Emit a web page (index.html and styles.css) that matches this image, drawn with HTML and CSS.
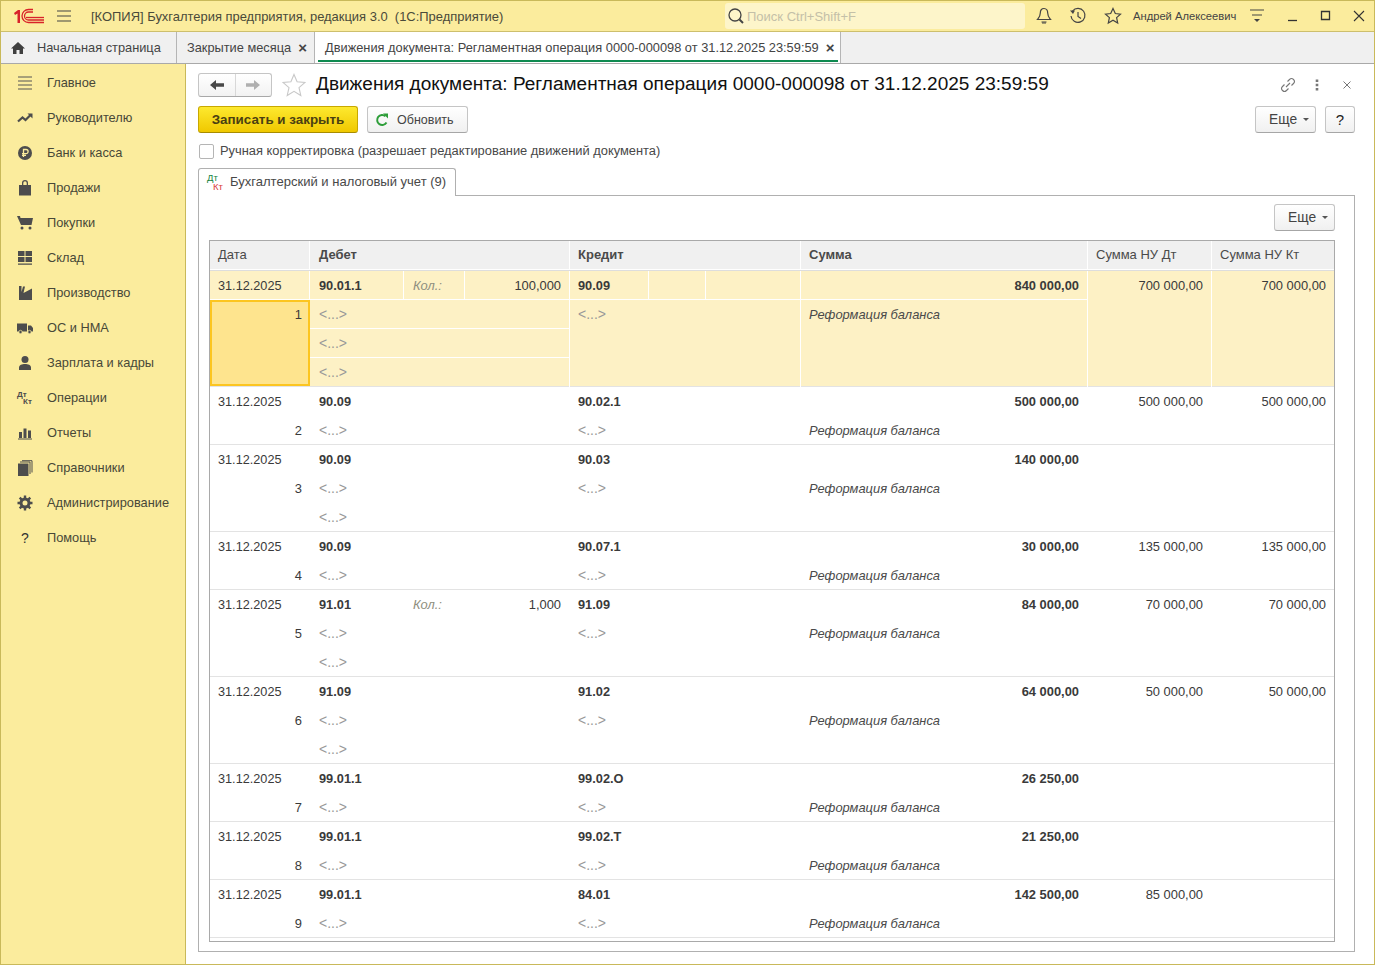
FILE: index.html
```html
<!DOCTYPE html>
<html lang="ru">
<head>
<meta charset="utf-8">
<title>Движения документа</title>
<link rel="stylesheet" href="styles.css">
</head>
<body>
<div class="app">
  <header class="titlebar">
    <svg class="logo" width="32" height="16" viewBox="0 0 32 16"><path d="M1 5 5 2h2v13H4.500V5.500L2 7z" fill="#d8232a"/><path d="M31 14.500H15.500a6.500 6.500 0 1 1 0-13H20M31 12H15.500a4 4 0 1 1 0-8H20" fill="none" stroke="#d8232a" stroke-width="1.300"/><path d="M13 9.500h18" stroke="#d8232a" stroke-width="1.300" fill="none"/></svg>
    <svg class="burger" width="16" height="14" viewBox="0 0 16 14"><path d="M1 2h14M1 7h14M1 12h14" stroke="#444" stroke-width="1.200"/></svg>
    <div class="apptitle">[КОПИЯ] Бухгалтерия предприятия, редакция 3.0&nbsp; (1С:Предприятие)</div>
    <div class="search">
      <svg width="18" height="18" viewBox="0 0 18 18"><circle cx="8" cy="8" r="6" fill="none" stroke="#444" stroke-width="1.300"/><path d="M12.500 12.500 16 16" stroke="#444" stroke-width="2"/></svg>
      <span>Поиск Ctrl+Shift+F</span>
    </div>
    <div class="sysicons">
      <svg width="16" height="18" viewBox="0 0 16 18"><path d="M8 1.500c-2.600 0-3.700 2-3.700 4.500 0 3.500-1.500 5-2.800 6.500h13C13.200 11 11.700 9.500 11.700 6c0-2.500-1.100-4.500-3.700-4.500zM5.500 15h5" fill="none" stroke="#444" stroke-width="1.200"/><path d="M6 15.500h4v1H6z" fill="#444"/></svg>
      <svg width="18" height="18" viewBox="0 0 18 18"><path d="M3.500 4A7 7 0 1 1 2 9" fill="none" stroke="#444" stroke-width="1.200"/><path d="M1 3.500 4 7l2-3.500z" fill="#444"/><path d="M9 5v4.500l3 2" fill="none" stroke="#444" stroke-width="1.200"/></svg>
      <svg width="18" height="18" viewBox="0 0 18 18"><path d="M9 1.500l2.300 5 5.200.6-3.900 3.500 1.100 5.400L9 13.200 4.300 16l1.100-5.400L1.500 7.100l5.200-.6z" fill="none" stroke="#444" stroke-width="1.200"/></svg>
    </div>
    <div class="username">Андрей Алексеевич</div>
    <svg class="sysmenu" width="16" height="16" viewBox="0 0 16 16"><path d="M1 2h14M3 7h10" stroke="#444" stroke-width="1.200"/><path d="M5 11h6l-3 3z" fill="#444"/></svg>
    <div class="wincontrols">
      <svg width="12" height="12" viewBox="0 0 12 12"><path d="M1 10.500h9" stroke="#333" stroke-width="1.300"/></svg>
      <svg width="12" height="12" viewBox="0 0 12 12"><path d="M1.500 1.500h8v8h-8z" fill="none" stroke="#333" stroke-width="1.300"/></svg>
      <svg width="12" height="12" viewBox="0 0 12 12"><path d="M1 1l10 10M11 1 1 11" stroke="#333" stroke-width="1.100"/></svg>
    </div>
  </header>

  <nav class="tabs">
    <div class="tab tab-home">
      <svg width="14" height="12" viewBox="0 0 14 12"><path d="M7 0 0 6.500h2V12h3.500V8h3v4H12V6.500h2z" fill="#3f3f3f"/></svg>
      <span>Начальная страница</span>
    </div>
    <div class="tab tab-close"><span>Закрытие месяца</span><b class="x">×</b></div>
    <div class="tab tab-active"><span>Движения документа: Регламентная операция 0000-000098 от 31.12.2025 23:59:59</span><b class="x">×</b></div>
  </nav>

  <div class="main">
    <aside class="sidebar">
      <div class="side-item"><svg viewBox="0 0 16 16"><path d="M1 2h14M1 6h14M1 10h14M1 14h14" stroke="#555" stroke-width="1"/></svg><span>Главное</span></div>
      <div class="side-item"><svg viewBox="0 0 16 16"><path d="M1 11.500 5.500 7.500 8.500 10 14 4.500" fill="none" stroke="#4d4d4d" stroke-width="2.200"/><path d="M10.500 3.500h5v5z" fill="#4d4d4d"/></svg><span>Руководителю</span></div>
      <div class="side-item"><svg viewBox="0 0 16 16"><circle cx="8" cy="8" r="7" fill="#4d4d4d"/><path d="M6.500 12V4.500h2.500a2 2 0 0 1 0 4.200H5M5 10.300h4" fill="none" stroke="#fbec9d" stroke-width="1.300"/></svg><span>Банк и касса</span></div>
      <div class="side-item"><svg viewBox="0 0 16 16"><path d="M2 5h3V3a3 3 0 0 1 6 0v2h3v10.500H2zM6.300 5h3.400V3a1.700 1.700 0 0 0-3.400 0z" fill="#4d4d4d" fill-rule="evenodd"/></svg><span>Продажи</span></div>
      <div class="side-item"><svg viewBox="0 0 16 16"><path d="M0 1h3l.5 2H16l-1.500 7H4z" fill="#4d4d4d"/><circle cx="5" cy="13" r="1.500" fill="#4d4d4d"/><circle cx="13" cy="13" r="1.500" fill="#4d4d4d"/></svg><span>Покупки</span></div>
      <div class="side-item"><svg viewBox="0 0 16 16"><path d="M1 1h6.500v5H1zM8.500 1H15v5H8.500zM1 7h6.500v5H1zM8.500 7H15v5H8.500zM1 13.500h14v1.300H1z" fill="#4d4d4d"/></svg><span>Склад</span></div>
      <div class="side-item"><svg viewBox="0 0 16 16"><path d="M2 15V1h2.500v6L6 1.500h2L6.500 8 15 3.500V15z" fill="#4d4d4d"/></svg><span>Производство</span></div>
      <div class="side-item"><svg viewBox="0 0 16 16"><path d="M0 3.500h10v8H0zM11 5.500h3l2 2.500v3.500h-5z" fill="#4d4d4d"/><circle cx="3.500" cy="12" r="1.700" fill="#4d4d4d" stroke="#fbec9d" stroke-width=".7"/><circle cx="12.500" cy="12" r="1.700" fill="#4d4d4d" stroke="#fbec9d" stroke-width=".7"/></svg><span>ОС и НМА</span></div>
      <div class="side-item"><svg viewBox="0 0 16 16"><circle cx="8" cy="4.500" r="3.500" fill="#4d4d4d"/><path d="M2 15v-2.500C2 10 5 9 8 9s6 1 6 3.500V15z" fill="#4d4d4d"/></svg><span>Зарплата и кадры</span></div>
      <div class="side-item side-dt"><i class="dtk"><em>Дт</em><em>Кт</em></i><span>Операции</span></div>
      <div class="side-item"><svg viewBox="0 0 16 16"><path d="M2 7h3v6H2zM6.500 3.500h3V13h-3zM11 5.500h3V13h-3zM1 13.500h14v1H1z" fill="#4d4d4d"/></svg><span>Отчеты</span></div>
      <div class="side-item"><svg viewBox="0 0 16 16"><path d="M1 3.500h10.500V16H1z" fill="#4d4d4d"/><path d="M3 2h10v12M5 .7h10v11.800" fill="none" stroke="#4d4d4d" stroke-width="1"/></svg><span>Справочники</span></div>
      <div class="side-item"><svg viewBox="0 0 16 16"><circle cx="8" cy="8" r="4" fill="none" stroke="#4d4d4d" stroke-width="3"/><path d="M8 .5v15M.5 8h15M2.700 2.700l10.600 10.600M13.300 2.700 2.700 13.300" stroke="#4d4d4d" stroke-width="2.400" stroke-dasharray="2.800 9.400"/></svg><span>Администрирование</span></div>
      <div class="side-item side-q"><i>?</i><span>Помощь</span></div>
    </aside>

    <main class="content">
      <div class="headrow">
        <div class="navbtns">
          <div class="navbtn"><svg width="14" height="12" viewBox="0 0 14 12"><path d="M0 6l6-5v3.200h8v3.600H6V11z" fill="#484848"/></svg></div>
          <div class="navbtn"><svg width="14" height="12" viewBox="0 0 14 12"><path d="M14 6 8 1v3.200H0v3.600h8V11z" fill="#b0b0b0"/></svg></div>
        </div>
        <svg class="favstar" width="24" height="24" viewBox="0 0 24 24"><path d="M12 1.500l3.100 7.300 7.900.7-6 5.200 1.800 7.800L12 18.300l-6.800 4.200L7 14.700 1 9.500l7.900-.7z" fill="none" stroke="#c8c8c8" stroke-width="1.100"/></svg>
        <h1>Движения документа: Регламентная операция 0000-000098 от 31.12.2025 23:59:59</h1>
        <div class="headicons">
          <svg width="16" height="16" viewBox="0 0 16 16"><path d="M6 10 10 6M7.500 4.500l2-2a2.800 2.800 0 0 1 4 4l-2 2M8.500 11.500l-2 2a2.800 2.800 0 0 1-4-4l2-2" fill="none" stroke="#777" stroke-width="1.100"/></svg>
          <svg width="4" height="12" viewBox="0 0 4 12"><path d="M.7.500h2.600v2.400H.7zM.7 4.800h2.600v2.400H.7zM.7 9.100h2.600v2.400H.7z" fill="#777"/></svg>
          <svg class="close-form" width="8" height="8" viewBox="0 0 8 8"><path d="M.5.500l7 7M7.500.500l-7 7" stroke="#777" stroke-width="1"/></svg>
        </div>
      </div>

      <div class="toolbar">
        <div class="btn btn-primary">Записать и закрыть</div>
        <div class="btn btn-refresh"><svg width="14" height="14" viewBox="0 0 14 14"><path d="M11.500 9.500A5 5 0 1 1 10.500 3.300" fill="none" stroke="#2e9e3a" stroke-width="2"/><path d="M8 .5h5v5z" fill="#2e9e3a"/></svg><span>Обновить</span></div>
        <div class="toolbar-right">
          <div class="btn btn-more">Еще<i class="caret"></i></div>
          <div class="btn btn-help">?</div>
        </div>
      </div>

      <label class="check"><i class="box"></i><span>Ручная корректировка (разрешает редактирование движений документа)</span></label>

      <div class="tabstrip">
        <div class="doc-tab"><i class="dtk dtk-color"><em>Дт</em><em>Кт</em></i><span>Бухгалтерский и налоговый учет (9)</span></div>
      </div>

      <section class="panel">
        <div class="panel-tools"><div class="btn btn-more">Еще<i class="caret"></i></div></div>
        <div class="grid">
          <div class="grid-head rec-cols">
            <div class="h c-date">Дата</div>
            <div class="h c-debit b">Дебет</div>
            <div class="h c-credit b">Кредит</div>
            <div class="h c-sum b">Сумма</div>
            <div class="h c-dt">Сумма НУ Дт</div>
            <div class="h c-kt">Сумма НУ Кт</div>
          </div>

          <div class="rec rec-cols rec-sel l4">
            <div class="date r1 sep">31.12.2025</div>
            <div class="num cur">1</div>
            <div class="cell acc r1 s1 sep">90.01.1</div>
            <div class="cell lbl r1 s2 sep">Кол.:</div>
            <div class="cell val r1 s3 sep">100,000</div>
            <div class="cell sub r2 dspan sep">&lt;...&gt;</div>
            <div class="cell sub r3 dspan sep">&lt;...&gt;</div>
            <div class="cell sub r4 dspan">&lt;...&gt;</div>
            <div class="cell acc r1 s4 sep">90.09</div>
            <div class="cell r1 s5 sep"></div>
            <div class="cell r1 s6 sep"></div>
            <div class="cell sub r2 cspan tall">&lt;...&gt;</div>
            <div class="cell amt r1 c-sum sep">840 000,00</div>
            <div class="cell note r2 c-sum tall">Реформация баланса</div>
            <div class="cell val r1 c-dt full">700 000,00</div>
            <div class="cell val r1 c-kt full">700 000,00</div>
          </div>

          <div class="rec rec-cols l2">
            <div class="date r1">31.12.2025</div><div class="num">2</div>
            <div class="cell acc r1 s1">90.09</div><div class="cell sub r2 dspan">&lt;...&gt;</div>
            <div class="cell acc r1 cspan">90.02.1</div><div class="cell sub r2 cspan">&lt;...&gt;</div>
            <div class="cell amt r1 c-sum">500 000,00</div><div class="cell note r2 c-sum">Реформация баланса</div>
            <div class="cell val r1 c-dt">500 000,00</div><div class="cell val r1 c-kt">500 000,00</div>
          </div>

          <div class="rec rec-cols l3">
            <div class="date r1">31.12.2025</div><div class="num">3</div>
            <div class="cell acc r1 s1">90.09</div><div class="cell sub r2 dspan">&lt;...&gt;</div><div class="cell sub r3 dspan">&lt;...&gt;</div>
            <div class="cell acc r1 cspan">90.03</div><div class="cell sub r2 cspan">&lt;...&gt;</div>
            <div class="cell amt r1 c-sum">140 000,00</div><div class="cell note r2 c-sum">Реформация баланса</div>
          </div>

          <div class="rec rec-cols l2">
            <div class="date r1">31.12.2025</div><div class="num">4</div>
            <div class="cell acc r1 s1">90.09</div><div class="cell sub r2 dspan">&lt;...&gt;</div>
            <div class="cell acc r1 cspan">90.07.1</div><div class="cell sub r2 cspan">&lt;...&gt;</div>
            <div class="cell amt r1 c-sum">30 000,00</div><div class="cell note r2 c-sum">Реформация баланса</div>
            <div class="cell val r1 c-dt">135 000,00</div><div class="cell val r1 c-kt">135 000,00</div>
          </div>

          <div class="rec rec-cols l3">
            <div class="date r1">31.12.2025</div><div class="num">5</div>
            <div class="cell acc r1 s1">91.01</div><div class="cell lbl r1 s2">Кол.:</div><div class="cell val r1 s3">1,000</div>
            <div class="cell sub r2 dspan">&lt;...&gt;</div><div class="cell sub r3 dspan">&lt;...&gt;</div>
            <div class="cell acc r1 cspan">91.09</div><div class="cell sub r2 cspan">&lt;...&gt;</div>
            <div class="cell amt r1 c-sum">84 000,00</div><div class="cell note r2 c-sum">Реформация баланса</div>
            <div class="cell val r1 c-dt">70 000,00</div><div class="cell val r1 c-kt">70 000,00</div>
          </div>

          <div class="rec rec-cols l3">
            <div class="date r1">31.12.2025</div><div class="num">6</div>
            <div class="cell acc r1 s1">91.09</div><div class="cell sub r2 dspan">&lt;...&gt;</div><div class="cell sub r3 dspan">&lt;...&gt;</div>
            <div class="cell acc r1 cspan">91.02</div><div class="cell sub r2 cspan">&lt;...&gt;</div>
            <div class="cell amt r1 c-sum">64 000,00</div><div class="cell note r2 c-sum">Реформация баланса</div>
            <div class="cell val r1 c-dt">50 000,00</div><div class="cell val r1 c-kt">50 000,00</div>
          </div>

          <div class="rec rec-cols l2">
            <div class="date r1">31.12.2025</div><div class="num">7</div>
            <div class="cell acc r1 s1">99.01.1</div><div class="cell sub r2 dspan">&lt;...&gt;</div>
            <div class="cell acc r1 cspan">99.02.О</div><div class="cell sub r2 cspan">&lt;...&gt;</div>
            <div class="cell amt r1 c-sum">26 250,00</div><div class="cell note r2 c-sum">Реформация баланса</div>
          </div>

          <div class="rec rec-cols l2">
            <div class="date r1">31.12.2025</div><div class="num">8</div>
            <div class="cell acc r1 s1">99.01.1</div><div class="cell sub r2 dspan">&lt;...&gt;</div>
            <div class="cell acc r1 cspan">99.02.Т</div><div class="cell sub r2 cspan">&lt;...&gt;</div>
            <div class="cell amt r1 c-sum">21 250,00</div><div class="cell note r2 c-sum">Реформация баланса</div>
          </div>

          <div class="rec rec-cols l2">
            <div class="date r1">31.12.2025</div><div class="num">9</div>
            <div class="cell acc r1 s1">99.01.1</div><div class="cell sub r2 dspan">&lt;...&gt;</div>
            <div class="cell acc r1 cspan">84.01</div><div class="cell sub r2 cspan">&lt;...&gt;</div>
            <div class="cell amt r1 c-sum">142 500,00</div><div class="cell note r2 c-sum">Реформация баланса</div>
            <div class="cell val r1 c-dt">85 000,00</div>
          </div>
        </div>
      </section>
    </main>
  </div>
</div>
</body>
</html>
```
FILE: styles.css
```css
* { box-sizing: border-box; }
html, body { margin: 0; height: 100%; overflow: hidden; }
body {
  font-family: "Liberation Sans", Arial, sans-serif;
  font-size: 13px;
  color: #3a3a3a;
  background: #fff;
}
i, em { font-style: normal; }
.app {
  width: 1375px;
  height: 965px;
  display: flex;
  flex-direction: column;
  border: 1px solid #c9b95a;
}

/* title bar */
.titlebar {
  height: 31px;
  flex: none;
  display: flex;
  align-items: center;
  background: #fbec9d;
  border-bottom: 1px solid #cdbf6d;
}
.logo { margin-left: 12px; flex: none; }
.burger { margin-left: 11px; flex: none; }
.apptitle { margin-left: 19px; width: 634px; flex: none; white-space: nowrap; color: #4a4a3a; font-size: 12.94px; }
.search {
  width: 300px;
  height: 26px;
  flex: none;
  display: flex;
  align-items: center;
  gap: 2px;
  padding-left: 2px;
  background: #fdf5ca;
  border-radius: 3px;
  color: #c4c0a8;
  font-size: 13px;
}
.sysicons { display: flex; gap: 17px; align-items: center; margin-left: 11px; flex: none; }
.username { margin-left: 11px; font-size: 11.2px; white-space: nowrap; width: 104px; flex: none; color: #444; }
.sysmenu { margin-left: 12px; flex: none; }
.wincontrols { margin-left: 22px; display: flex; gap: 21px; align-items: center; flex: none; }

/* tab bar */
.tabs {
  height: 32px;
  flex: none;
  display: flex;
  background: #f0f0f0;
  border-bottom: 1px solid #a9a9a9;
}
.tab {
  height: 31px;
  display: flex;
  align-items: center;
  border-right: 1px solid #b5b5b5;
  white-space: nowrap;
  color: #444;
  font-size: 12.8px;
}
.tab-home { width: 176px; padding-left: 10px; gap: 12px; }
.tab-close { width: 138px; padding-left: 10px; }
.tab-close .x { margin-left: 7px; }
.tab-active {
  width: 526px;
  padding-left: 10px;
  background: #fff;
  font-size: 12.82px;
  position: relative;
}
.tab-active::after {
  content: "";
  position: absolute;
  left: 3px;
  right: 2px;
  bottom: 1px;
  height: 2px;
  background: #0e8a50;
}
.tab-active .x { margin-left: 7px; }
.x { font-size: 15px; line-height: 1; color: #444; }

/* layout */
.main { flex: 1; display: flex; min-height: 0; }
.sidebar {
  width: 185px;
  flex: none;
  padding-top: 1px;
  background: #fbec9d;
  border-right: 1px solid #c9b95a;
}
.side-item {
  height: 35px;
  display: flex;
  align-items: center;
  padding-left: 16px;
  color: #484838;
  font-size: 12.8px;
  white-space: nowrap;
}
.side-item svg { width: 16px; height: 16px; flex: none; margin-right: 14px; }
.side-q i { width: 16px; margin-right: 14px; text-align: center; font-weight: 400; font-size: 14px; color: #333; flex: none; }
.dtk { display: flex; flex-direction: column; width: 16px; margin-right: 14px; flex: none; font-size: 8px; line-height: 7px; font-weight: 700; color: #4d4d4d; }
.dtk em:last-child { margin-left: 6px; }
.dtk-color { width: 17px; font-size: 9.5px; line-height: 9px; font-weight: 400; }
.dtk-color em:first-child { color: #14843f; }
.dtk-color em:last-child { color: #d94040; }

.content { flex: 1; min-width: 0; display: flex; flex-direction: column; padding: 8px 19px 12px 12px; }

/* header */
.headrow { height: 25px; display: flex; align-items: center; flex: none; }
.navbtns {
  width: 74px;
  height: 24px;
  display: flex;
  border: 1px solid #c5c5c5;
  border-bottom-color: #a8a8a8;
  border-radius: 3px;
  background: linear-gradient(#fff, #f2f2f2);
}
.navbtn { flex: 1; display: flex; align-items: center; justify-content: center; }
.navbtn + .navbtn { border-left: 1px solid #d8d8d8; }
.favstar { margin-left: 10px; flex: none; }
h1 { margin: 0 0 0 10px; padding-bottom: 2px; font-weight: 400; font-size: 19.03px; color: #111; white-space: nowrap; flex: none; }
.headicons { margin-left: auto; display: flex; align-items: center; gap: 19px; padding-right: 4px; }
.close-form { margin-left: 5px; }

/* toolbar */
.toolbar { height: 27px; margin-top: 9px; display: flex; flex: none; align-items: stretch; }
.btn {
  display: flex;
  align-items: center;
  justify-content: center;
  border: 1px solid #c5c5c5;
  border-bottom-color: #a6a6a6;
  border-radius: 3px;
  background: linear-gradient(#fff, #f0f0f0);
  color: #444;
  white-space: nowrap;
}
.btn-primary {
  width: 160px;
  background: linear-gradient(#fde92f, #f0c800);
  border-color: #c8a800;
  border-bottom-color: #a88c00;
  color: #4a4012;
  font-weight: 700;
  font-size: 13.4px;
}
.btn-refresh { width: 101px; margin-left: 9px; gap: 8px; font-size: 12.5px; justify-content: flex-start; padding-left: 7px; }
.toolbar-right { margin-left: auto; display: flex; gap: 9px; }
.btn-more { width: 61px; gap: 6px; font-size: 13.8px; justify-content: flex-start; padding-left: 13px; }
.btn-help { width: 30px; font-size: 15px; color: #222; }
.caret { width: 0; height: 0; border: 3px solid transparent; border-top: 3px solid #555; border-bottom: 0; }

/* check */
.check { height: 16px; margin-top: 10px; display: flex; align-items: center; gap: 6px; flex: none; font-size: 12.88px; color: #484848; }
.check span { padding-bottom: 2px; }
.box { width: 15px; height: 15px; margin-left: 1px; border: 1px solid #b5b5b5; border-radius: 2px; background: #fff; }

/* tabs of document */
.tabstrip { height: 28px; margin-top: 9px; flex: none; display: flex; }
.doc-tab {
  width: 258px;
  height: 28px;
  padding: 0 0 2px 8px;
  display: flex;
  align-items: center;
  border: 1px solid #b0b0b0;
  border-bottom: 0;
  border-radius: 3px 3px 0 0;
  background: #fff;
  position: relative;
  z-index: 1;
  font-size: 13.04px;
  color: #484848;
  white-space: nowrap;
}
.doc-tab .dtk { margin-right: 6px; }
.panel {
  flex: 1;
  min-height: 0;
  margin-top: -1px;
  padding: 8px 19px 9px 10px;
  border: 1px solid #b0b0b0;
  display: flex;
  flex-direction: column;
}
.panel-tools { height: 27px; flex: none; display: flex; justify-content: flex-end; }
.grid {
  margin-top: 9px;
  flex: 1;
  min-height: 0;
  border: 1px solid #a9a9a9;
  overflow: hidden;
}
.rec-cols { display: grid; grid-template-columns: 100px 94px 61px 105px 79px 57px 95px 287px 124px 122px; }
.grid-head { height: 30px; background: #f0f0f0; border-bottom: 1px solid #ddd; }
.h {
  padding: 6px 8px 0;
  font-size: 13px;
  color: #4a4a4a;
  border-right: 1px solid #fff;
  border-bottom: 1px solid #fff;
}
.h.b { font-weight: 700; }
.h.c-debit { padding-left: 9px; }
.h.c-kt { border-right: 0; }
.c-date { grid-column: 1; }
.c-debit { grid-column: 2 / 5; }
.c-credit { grid-column: 5 / 8; }
.c-sum { grid-column: 8; }
.c-dt { grid-column: 9; }
.c-kt { grid-column: 10; }

.rec { border-bottom: 1px solid #e3e3e3; color: #3a3a3a; font-size: 12.9px; }
.l2 { height: 58px; grid-template-rows: repeat(2, 29px); }
.l3 { height: 87px; grid-template-rows: repeat(3, 29px); }
.l4 { height: 116px; grid-template-rows: repeat(4, 29px); }
.r1 { grid-row: 1; }
.r2 { grid-row: 2; }
.r3 { grid-row: 3; }
.r4 { grid-row: 4; }
.s1 { grid-column: 2; }
.s2 { grid-column: 3; }
.s3 { grid-column: 4; }
.s4 { grid-column: 5; }
.s5 { grid-column: 6; }
.s6 { grid-column: 7; }
.dspan { grid-column: 2 / 5; }
.cspan { grid-column: 5 / 8; }

.date { grid-column: 1; padding: 8px 8px 0; white-space: nowrap; font-size: 12.7px; }
.num { grid-column: 1; grid-row: 2 / -1; padding: 7px 8px 0; text-align: right; }
.cell { padding: 7px 8px 0; white-space: nowrap; min-width: 0; border-right: 1px solid transparent; }
.cell.c-kt { border-right: 0; }
.cell.s1, .cell.s2, .cell.dspan { padding-left: 9px; }
.acc { font-weight: 700; font-size: 12.8px; }
.amt { font-weight: 700; text-align: right; }
.val { text-align: right; }
.lbl { font-style: italic; color: #8f8f80; }
.cell.sub { color: #999; font-size: 14px; padding-top: 6px; }
.note { font-style: italic; color: #4a4a4a; }

.rec-sel { background: #fdf1c5; height: 116px; }
.rec-sel .cell, .rec-sel .date { border-right: 1px solid #fff; }
.rec-sel .sep { border-bottom: 1px solid #fff; }
.rec-sel .tall { grid-row: 2 / 5; }
.rec-sel .full { grid-row: 1 / 5; }
.rec-sel .cell.c-kt { border-right: 0; }
.rec-sel .cur {
  grid-row: 2 / 5;
  padding: 5px 6px 0;
  background: #fee48e;
  border: 2px solid #fcc520;
  margin-bottom: 1px;
}
```
